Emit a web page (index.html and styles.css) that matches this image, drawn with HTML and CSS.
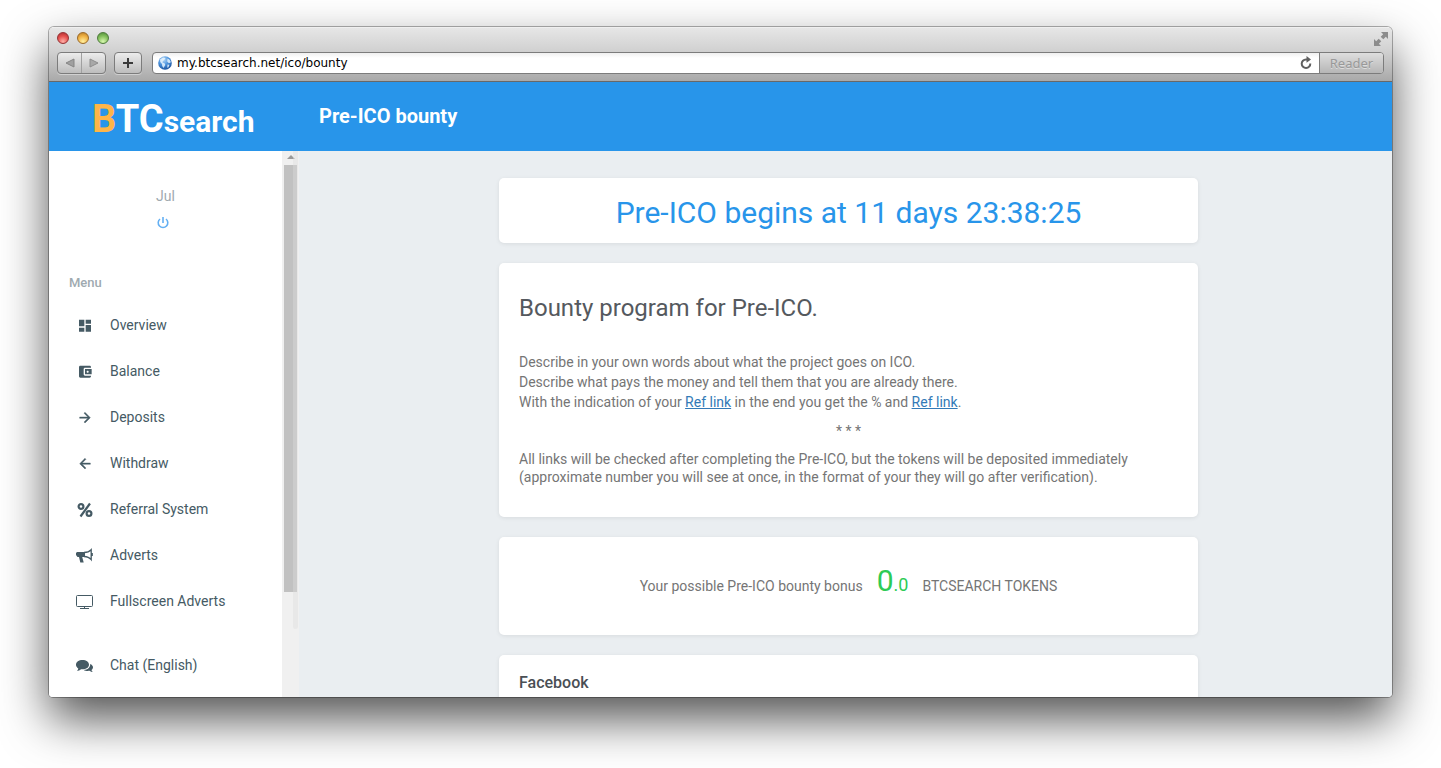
FILE: index.html
```html
<!DOCTYPE html>
<html lang="en">
<head>
  <meta charset="UTF-8">
  <meta name="viewport" content="width=device-width, initial-scale=1">
  <title>Pre-ICO bounty - BTCsearch</title>
  <link rel="stylesheet" href="styles.css">
</head>
<body>

<div class="window">
  <div class="chrome">
    <div class="titlebar">
      <div class="lights">
        <button class="light red" aria-label="Close"></button>
        <button class="light yellow" aria-label="Minimize"></button>
        <button class="light green" aria-label="Zoom"></button>
      </div>
      <button class="expand" aria-label="Full screen">
        <svg width="14" height="14" viewBox="0 0 14 14" fill="#8c8c8c"><path d="M7 0h7v7l-2.200-2.200L9.300 7.300 6.700 4.700l2.500-2.500zM0 7l2.200 2.200 2.500-2.500 2.600 2.600-2.500 2.500L7 14H0z"/></svg>
      </button>
    </div>
    <div class="toolbar">
      <div class="nav-buttons">
        <button aria-label="Back"><svg width="10" height="10" viewBox="0 0 10 10"><path d="M9 1v8L1 5z" fill="#a0a0a0" stroke="#858585"/></svg></button>
        <button aria-label="Forward"><svg width="10" height="10" viewBox="0 0 10 10"><path d="M1 1v8l8-4z" fill="#a8a8a8" stroke="#8c8c8c"/></svg></button>
      </div>
      <button class="add" aria-label="Add bookmark"><svg width="10" height="10" viewBox="0 0 10 10"><path d="M5 0v10M0 5h10" stroke="#3a3a3a" stroke-width="2"/></svg></button>
      <div class="address">
        <svg class="globe" width="14" height="14" viewBox="0 0 14 14">
          <defs>
            <radialGradient id="sea" cx=".4" cy=".25" r=".8"><stop offset="0" stop-color="#b4d8f7"/><stop offset=".5" stop-color="#4b92dc"/><stop offset="1" stop-color="#174c96"/></radialGradient>
          </defs>
          <circle cx="7" cy="7" r="6.800" fill="url(#sea)"/>
          <path d="M2 3.500l3-2 2.500.5-.8 1.500-1.400 1.200-1 1.600 2.500 1.200.5 1.600-1.800 3-1.300-2-.2-2L2.300 6zM9.500 2.500l2.200 1.200 1.200 2.500-2 1-1.700-1.600zM9.500 8.500l2 .2-1 2.500-1.300.6z" fill="#e9f5fd" opacity=".85"/>
        </svg>
        <input type="text" aria-label="Address" value="my.btcsearch.net/ico/bounty">
        <button class="reload" aria-label="Reload"><svg width="12" height="14" viewBox="0 0 12 14"><path d="M10.300 7.500A4.300 4.300 0 1 1 6 3.400h1.500" fill="none" stroke="#606060" stroke-width="2"/><path d="M6.500 0l4.500 3.400-4.500 3.300z" fill="#606060"/></svg></button>
        <button class="reader" disabled>Reader</button>
      </div>
    </div>
  </div>

  <header class="header">
    <a class="logo" href="#"><span class="logo-big"><span class="logo-b">B</span>TC</span>search</a>
    <h1>Pre-ICO bounty</h1>
  </header>

  <div class="page">
    <aside class="sidebar">
      <div class="sidebar-content">
        <div class="user">
          <span>Jul</span>
          <a href="#" aria-label="Log out"><svg width="12" height="12" viewBox="0 0 12 12" fill="none" stroke="#64b0f3" stroke-width="1.600"><path d="M6 0v6M3 2a4.800 4.800 0 1 0 6 0"/></svg></a>
        </div>
        <h2>Menu</h2>
        <nav class="menu">
          <a href="#">
            <svg width="18" height="18" viewBox="-1.500 -2.500 27 27"><path d="M3 13h8V3H3v10zm0 8h8v-6H3v6zm10 0h8V11h-8v10zm0-18v6h8V3h-8z"/></svg>
            Overview
          </a>
          <a href="#">
            <svg width="18" height="18" viewBox="-1.500 -2.500 27 27"><path d="M21 18v1c0 1.100-.9 2-2 2H5c-1.110 0-2-.9-2-2V5c0-1.100.89-2 2-2h14c1.100 0 2 .9 2 2v1h-9c-1.110 0-2 .9-2 2v8c0 1.100.89 2 2 2h9zm-9-2h10V8H12v8zm4-2.500c-.83 0-1.500-.67-1.500-1.500s.67-1.500 1.500-1.500 1.500.67 1.500 1.500-.67 1.500-1.500 1.500z"/></svg>
            Balance
          </a>
          <a href="#">
            <svg width="18" height="18" viewBox="-1.500 -2.500 27 27"><path d="M12 4l-1.410 1.410L16.170 11H4v2h12.170l-5.580 5.590L12 20l8-8z" stroke="#455a64" stroke-width=".6"/></svg>
            Deposits
          </a>
          <a href="#">
            <svg width="18" height="18" viewBox="-1.500 -2.500 27 27"><path d="M20 11H7.830l5.590-5.590L12 4l-8 8 8 8 1.410-1.410L7.830 13H20v-2z" stroke="#455a64" stroke-width=".6"/></svg>
            Withdraw
          </a>
          <a href="#">
            <svg width="18" height="18" viewBox="0 0 18 18"><g fill="none" stroke="#455a64" stroke-width="2.200"><circle cx="5" cy="6.500" r="2.400"/><circle cx="13" cy="13.500" r="2.400"/><path d="M14 3.500L4.500 16.500" stroke-width="2.200"/></g></svg>
            Referral System
          </a>
          <a href="#">
            <svg width="18" height="18" viewBox="0 0 18 18"><path d="M1 6h8v5H6.200l1.500 5.500H4.300L3 11H1.500L0 9V7z"/><path d="M8 6.500c3.500 0 6-1.500 7.200-2.800v10C14 12.200 11.500 10.600 8 10.500M16.200 7v3" fill="none" stroke="#455a64" stroke-width="1.300"/></svg>
            Adverts
          </a>
          <a href="#">
            <svg width="18" height="18" viewBox="0 0 18 18"><path d="M1.500 3.500h14a1 1 0 0 1 1 1v9a1 1 0 0 1-1 1h-14a1 1 0 0 1-1-1v-9a1 1 0 0 1 1-1zM8.500 14.500v2M4 16.500h9" fill="none" stroke="#455a64"/></svg>
            Fullscreen Adverts
          </a>
          <a class="chat" href="#">
            <svg width="18" height="18" viewBox="0 0 18 18"><path d="M6.500 4c3.600 0 6.500 2 6.500 4.700s-2.900 4.600-6.500 4.600l-1.500-.1C3.800 14.300 2.300 14.800 1 14.800c.7-.6 1.200-1.400 1.300-2.300C.9 11.500 0 10.300 0 8.700 0 6 2.900 4 6.500 4z"/><path d="M14.200 8c1.700.7 2.800 1.900 2.800 3.300 0 1.100-.6 2-1.500 2.700.1.800.5 1.400 1.300 2-1.200 0-2.300-.4-3.200-1.200-2.200.4-4.500 0-5.900-.8 3.900-.1 6.800-2.600 6.500-6z"/></svg>
            Chat (English)
          </a>
        </nav>
      </div>
      <div class="scrollbar">
        <svg width="8" height="4" viewBox="0 0 8 4"><path d="M0 4l4-4 4 4z" fill="#999"/></svg>
        <div class="thumb"></div>
        <div class="rail"></div>
      </div>
    </aside>

    <main class="main">
      <div class="cards">
        <section class="card countdown">Pre-ICO begins at 11 days 23:38:25</section>

        <section class="card program">
          <h2>Bounty program for Pre-ICO.</h2>
          <p class="intro">
            Describe in your own words about what the project goes on ICO.<br>
            Describe what pays the money and tell them that you are already there.<br>
            With the indication of your <a href="#">Ref link</a> in the end you get the % and <a href="#">Ref link</a>.
          </p>
          <p class="stars">* * *</p>
          <p>All links will be checked after completing the Pre-ICO, but the tokens will be deposited immediately (approximate number you will see at once, in the format of your they will go after verification).</p>
        </section>

        <section class="card bonus">
          <span>Your possible Pre-ICO bounty bonus</span>
          <span class="amount"><span class="whole">0</span>.0</span>
          <span>BTCSEARCH TOKENS</span>
        </section>

        <section class="card social">
          <h3>Facebook</h3>
        </section>
      </div>
    </main>
  </div>
</div>

</body>
</html>
```
FILE: styles.css
```css
* {
  box-sizing: border-box;
}
body {
  margin: 0;
  height: 100vh;
  padding: 27px 49px 71px;
  background: #fff;
  color: #757575;
  font-family: Roboto, Arial, sans-serif;
  font-size: 14px;
  overflow: hidden;
}
h1, h2, h3, p {
  margin: 0;
}
button {
  padding: 0;
  border: 0;
  background: none;
}
svg {
  display: block;
  flex: none;
}

/* browser window */
.window {
  height: 100%;
  display: flex;
  flex-direction: column;
  overflow: hidden;
  border-radius: 5px 5px 4px 4px;
  box-shadow: 0 0 0 1px rgba(0,0,0,.3), 0 22px 48px rgba(0,0,0,.68);
}
.chrome {
  flex: none;
  height: 55px;
  padding: 4px 8px 0;
  background: linear-gradient(#e6e6e6, #d0d0d0 45%, #a9a9a9);
  border-top: 1px solid #efefef;
  border-bottom: 1px solid #686868;
}
.titlebar {
  display: flex;
  justify-content: space-between;
  height: 20px;
}
.lights {
  display: flex;
  gap: 8px;
}
.light {
  width: 12px;
  height: 12px;
  border-radius: 50%;
}
.red {
  background: radial-gradient(circle at 50% 85%, #ffb0a8, #e5504d 55%, #a82b2d);
  border: 1px solid #943034;
}
.yellow {
  background: radial-gradient(circle at 50% 85%, #fff0a0, #f0b244 55%, #b87a25);
  border: 1px solid #9a6928;
}
.green {
  background: radial-gradient(circle at 50% 85%, #d8f8b0, #84c05c 55%, #4d8938);
  border: 1px solid #4e7b3c;
}
.expand {
  width: 14px;
  height: 14px;
  margin-right: -4px;
}
.toolbar {
  display: flex;
  gap: 8px;
  height: 22px;
}
.nav-buttons, .add {
  display: flex;
  border: 1px solid #7c7c7c;
  border-radius: 4px;
  background: linear-gradient(#ececec, #bdbdbd);
  box-shadow: 0 1px 0 rgba(255,255,255,.4);
}
.nav-buttons {
  width: 49px;
}
.nav-buttons button {
  flex: 1;
  display: grid;
  place-items: center;
}
.nav-buttons button + button {
  border-left: 1px solid #a0a0a0;
}
.add {
  width: 28px;
  align-items: center;
  justify-content: center;
}
.address {
  flex: 1;
  display: flex;
  align-items: center;
  margin-left: 2px;
  padding-left: 5px;
  gap: 5px;
  border: 1px solid #7c7c7c;
  border-radius: 4px;
  background: linear-gradient(#f0f0f0, #fff 5px);
}
.address input {
  flex: 1;
  min-width: 0;
  padding: 0;
  border: 0;
  outline: 0;
  background: none;
  color: #000;
  font: 12px "DejaVu Sans", "Noto Sans", sans-serif;
}
.reader {
  align-self: stretch;
  width: 64px;
  margin-left: 2px;
  border-left: 1px solid #7c7c7c;
  border-radius: 0 3px 3px 0;
  background: linear-gradient(#dedede, #b6b6b6);
  color: #999;
  font: 13px "Noto Sans", sans-serif;
  text-shadow: 0 1px 0 #ddd;
}

/* site header */
.header {
  flex: none;
  display: flex;
  align-items: center;
  height: 69px;
  background: #2895ea;
  color: #fff;
}
.header h1 {
  padding-left: 20px;
  font-size: 20px;
  font-weight: 700;
  line-height: 22px;
  padding-bottom: 2px;
}
.logo {
  width: 250px;
  padding: 8px 0 0 43px;
  color: #fff;
  font-size: 30px;
  font-weight: 700;
  line-height: 44px;
  text-decoration: none;
}
.logo-big {
  font-size: 38px;
}
.logo-b {
  color: #ffb548;
}

.page {
  flex: 1;
  min-height: 0;
  display: flex;
  background: #eaeef1;
}

/* sidebar */
.sidebar {
  flex: none;
  display: flex;
  width: 250px;
  background: #fff;
}
.sidebar-content {
  flex: 1;
  overflow: hidden;
}
.user {
  display: flex;
  flex-direction: column;
  align-items: center;
  gap: 11px;
  padding-top: 35px;
  color: #9faab0;
  line-height: 20px;
}
.user a {
  margin-right: 6px;
}
.sidebar h2 {
  margin-top: 44px;
  padding-left: 20px;
  color: #9faab0;
  font-size: 13px;
  font-weight: 500;
  line-height: 20px;
}
.menu {
  margin-top: 9px;
}
.menu a {
  display: flex;
  align-items: center;
  gap: 16px;
  height: 46px;
  padding-left: 27px;
  color: #455a64;
  text-decoration: none;
}
.menu svg {
  fill: #455a64;
}
.menu .chat {
  margin-top: 18px;
}
.scrollbar {
  position: relative;
  width: 17px;
  padding: 4px 2px 0;
  background: #f0f0f0;
}
.scrollbar svg {
  margin: 0 auto 6px;
}
.thumb {
  height: 427px;
  background: #c1c1c1;
}
.rail {
  position: absolute;
  top: 0;
  right: 1px;
  width: 5px;
  height: 478px;
  border-radius: 0 0 3px 3px;
  background: rgba(220,220,220,.4);
}

/* content */
.main {
  flex: 1;
  overflow: hidden;
  padding: 27px 0 0 6px;
}
.cards {
  display: flex;
  flex-direction: column;
  gap: 20px;
  max-width: 699px;
  margin: 0 auto;
}
.card {
  padding: 20px;
  border-radius: 5px;
  background: #fff;
  box-shadow: 0 1px 4px rgba(0,0,0,.08);
}
.countdown {
  padding: 15px 20px 10px;
  color: #2895ea;
  font-size: 30px;
  line-height: 40px;
  text-align: center;
}
.program {
  padding: 30px 20px 31px;
  line-height: 18px;
}
.program h2 {
  color: #55595e;
  font-size: 24px;
  font-weight: 400;
  line-height: 30px;
}
.program a {
  color: #337ab7;
  text-decoration: underline;
}
.intro {
  margin-top: 29px;
  line-height: 20px;
}
.stars {
  margin: 10px 0;
  text-align: center;
}
.bonus {
  display: flex;
  justify-content: center;
  align-items: baseline;
  gap: 14px;
  padding: 24px 20px 30px;
}
.amount {
  color: #2dcb55;
  font-size: 18px;
  line-height: 40px;
}
.whole {
  font-size: 30px;
}
.social {
  padding: 18px 20px 40px;
}
.social h3 {
  color: #4a4f55;
  font-size: 16px;
  font-weight: 500;
  line-height: 20px;
}
```
